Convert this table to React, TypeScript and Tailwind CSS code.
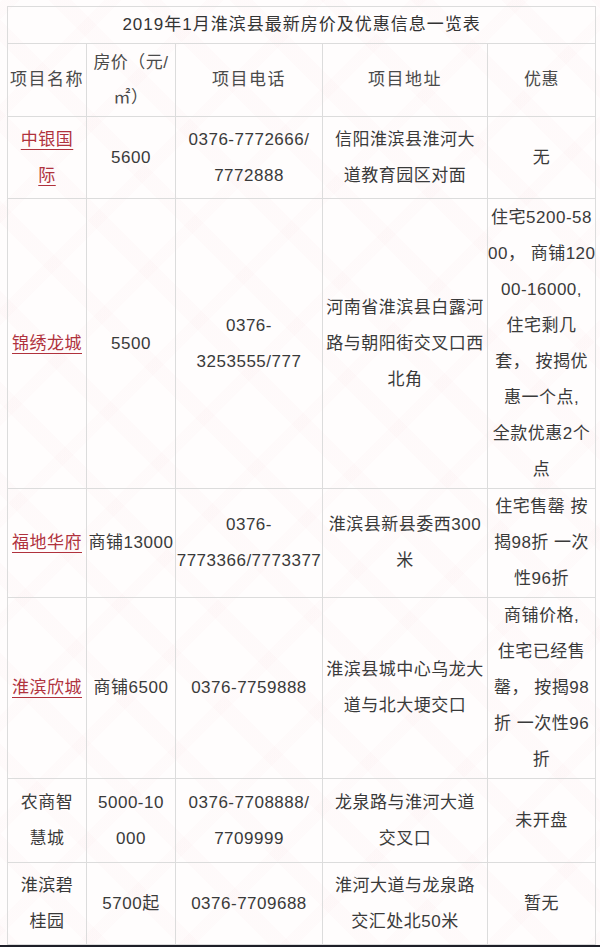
import React from 'react';

type Row = {
  h: string;
  name: string[];
  link?: boolean;
  price: string[];
  phone: string[];
  addr: string[];
  offer: string[];
};

const rows: Row[] = [
  {
    h: 'h-[82px]',
    name: ['中银国', '际'],
    link: true,
    price: ['5600'],
    phone: ['0376-7772666/', '7772888'],
    addr: ['信阳淮滨县淮河大', '道教育园区对面'],
    offer: ['无'],
  },
  {
    h: 'h-[290px]',
    name: ['锦绣龙城'],
    link: true,
    price: ['5500'],
    phone: ['0376-', '3253555/777'],
    addr: ['河南省淮滨县白露河', '路与朝阳街交叉口西', '北角'],
    offer: ['住宅5200-58', '00， 商铺120', '00-16000,', '住宅剩几', '套， 按揭优', '惠一个点,', '全款优惠2个', '点'],
  },
  {
    h: 'h-[109px]',
    name: ['福地华府'],
    link: true,
    price: ['商铺13000'],
    phone: ['0376-', '7773366/7773377'],
    addr: ['淮滨县新县委西300', '米'],
    offer: ['住宅售罄 按', '揭98折 一次', '性96折'],
  },
  {
    h: 'h-[180px]',
    name: ['淮滨欣城'],
    link: true,
    price: ['商铺6500'],
    phone: ['0376-7759888'],
    addr: ['淮滨县城中心乌龙大', '道与北大埂交口'],
    offer: ['商铺价格,', '住宅已经售', '罄， 按揭98', '折 一次性96', '折'],
  },
  {
    h: 'h-[84px]',
    name: ['农商智', '慧城'],
    price: ['5000-10', '000'],
    phone: ['0376-7708888/', '7709999'],
    addr: ['龙泉路与淮河大道', '交叉口'],
    offer: ['未开盘'],
  },
  {
    h: 'h-[82px]',
    name: ['淮滨碧', '桂园'],
    price: ['5700起'],
    phone: ['0376-7709688'],
    addr: ['淮河大道与龙泉路', '交汇处北50米'],
    offer: ['暂无'],
  },
];

const Lines = ({ lines }: { lines: string[] }) => (
  <>
    {lines.map((l, i) => (
      <div key={i} className="whitespace-nowrap">
        {l}
      </div>
    ))}
  </>
);

const Td = ({ children }: { children: React.ReactNode }) => (
  <td className="border border-[#dcdcdc] p-0 text-center align-middle leading-[36px]">{children}</td>
);

export default function App() {
  return (
    <div
      className="w-[600px] h-[947px] overflow-hidden flex flex-col bg-[#fffdfd] bg-[repeating-linear-gradient(45deg,rgba(226,120,135,0.025)_0px,rgba(226,120,135,0.025)_16px,transparent_16px,transparent_64px),repeating-linear-gradient(-45deg,rgba(226,120,135,0.02)_0px,rgba(226,120,135,0.02)_12px,transparent_12px,transparent_72px)] text-[17px] tracking-[0.5px] text-[#3a3a3a]"
      style={{ fontFamily: '"Liberation Sans", "Noto Sans CJK SC", sans-serif' }}
    >
      <div className="pl-[7px] pt-[6px] flex-1">
        <table className="w-[588px] table-fixed border-collapse">
          <colgroup>
            <col className="w-[79px]" />
            <col className="w-[89px]" />
            <col className="w-[147px]" />
            <col className="w-[165px]" />
            <col className="w-[108px]" />
          </colgroup>
          <tbody>
            <tr className="h-[37px]">
              <td colSpan={5} className="border border-[#dcdcdc] p-0 text-center align-middle text-[#333] tracking-[1px]">
                2019年1月淮滨县最新房价及优惠信息一览表
              </td>
            </tr>
            <tr className="h-[73px] text-[#4a4a4a]">
              <Td>
                <span className="tracking-[1.5px]">项目名称</span>
              </Td>
              <Td>
                <div className="leading-[35px]">
                  <div>房价（元/</div>
                  <div>㎡）</div>
                </div>
              </Td>
              <Td>
                <span className="tracking-[1.5px]">项目电话</span>
              </Td>
              <Td>
                <span className="tracking-[1.5px]">项目地址</span>
              </Td>
              <Td>优惠</Td>
            </tr>
            {rows.map((r, i) => (
              <tr key={i} className={r.h}>
                <Td>
                  {r.link ? (
                    <div className="text-[#b0323d] underline underline-offset-[4px] decoration-[1px]">
                      <Lines lines={r.name} />
                    </div>
                  ) : (
                    <Lines lines={r.name} />
                  )}
                </Td>
                <Td>
                  <Lines lines={r.price} />
                </Td>
                <Td>
                  <Lines lines={r.phone} />
                </Td>
                <Td>
                  <Lines lines={r.addr} />
                </Td>
                <Td>
                  <Lines lines={r.offer} />
                </Td>
              </tr>
            ))}
          </tbody>
        </table>
      </div>
      <div className="h-[4px] bg-[#1e1f28]" />
    </div>
  );
}
